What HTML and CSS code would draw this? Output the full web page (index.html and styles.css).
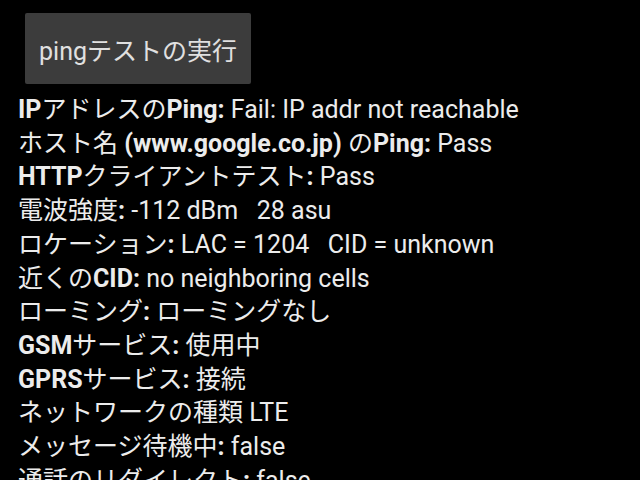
FILE: index.html
```html
<!DOCTYPE html>
<html lang="ja">
<head>
<meta charset="utf-8">
<link rel="stylesheet" href="styles.css">
</head>
<body>
<div class="screen">
  <div class="actions">
    <button class="btn">pingテストの実行</button>
  </div>
  <ul class="info">
    <li><b>IP<span class="ja">アドレスの</span>Ping:</b> Fail: IP addr not reachable</li>
    <li><b><span class="ja">ホスト名</span> (www.google.co.jp) <span class="ja">の</span>Ping:</b> Pass</li>
    <li><b>HTTP<span class="ja">クライアントテスト</span>:</b> Pass</li>
    <li><b><span class="ja">電波強度</span>:</b> -112 dBm&nbsp;&nbsp; 28 asu</li>
    <li><b><span class="ja">ロケーション</span>:</b> LAC = 1204&nbsp;&nbsp; CID = unknown</li>
    <li><b><span class="ja">近くの</span>CID:</b> no neighboring cells</li>
    <li><b><span class="ja">ローミング</span>:</b> ローミングなし</li>
    <li><b>GSM<span class="ja">サービス</span>:</b> 使用中</li>
    <li><b>GPRS<span class="ja">サービス</span>:</b> 接続</li>
    <li><b><span class="ja">ネットワークの種類</span></b> LTE</li>
    <li><b><span class="ja">メッセージ待機中</span>:</b> false</li>
    <li><b><span class="ja">通話のリダイレクト</span>:</b> false</li>
  </ul>
</div>
</body>
</html>
```
FILE: styles.css
```css
html, body {
  margin: 0;
  padding: 0;
  background: #000;
  height: 100%;
  overflow: hidden;
}
.screen {
  font-family: Roboto, "Noto Sans CJK JP", sans-serif;
  color: #ececec;
  font-size: 25px;
}
.actions {
  padding: 13px 0 0 25px;
}
.btn {
  display: block;
  width: 226px;
  height: 71px;
  background: #3c3c3c;
  border: none;
  border-radius: 2px;
  color: #e0e0e0;
  font-family: Roboto, "Noto Sans CJK JP", sans-serif;
  font-size: 25px;
  padding: 0;
  box-shadow: 0 1px 1px rgba(0,0,0,0.6);
}
.info {
  list-style: none;
  margin: 9px 0 0;
  padding: 0 0 0 18px;
}
.info li {
  line-height: 33.7px;
  white-space: nowrap;
}
.info b {
  font-weight: 700;
}
.info .ja {
  font-weight: 400;
}
```
